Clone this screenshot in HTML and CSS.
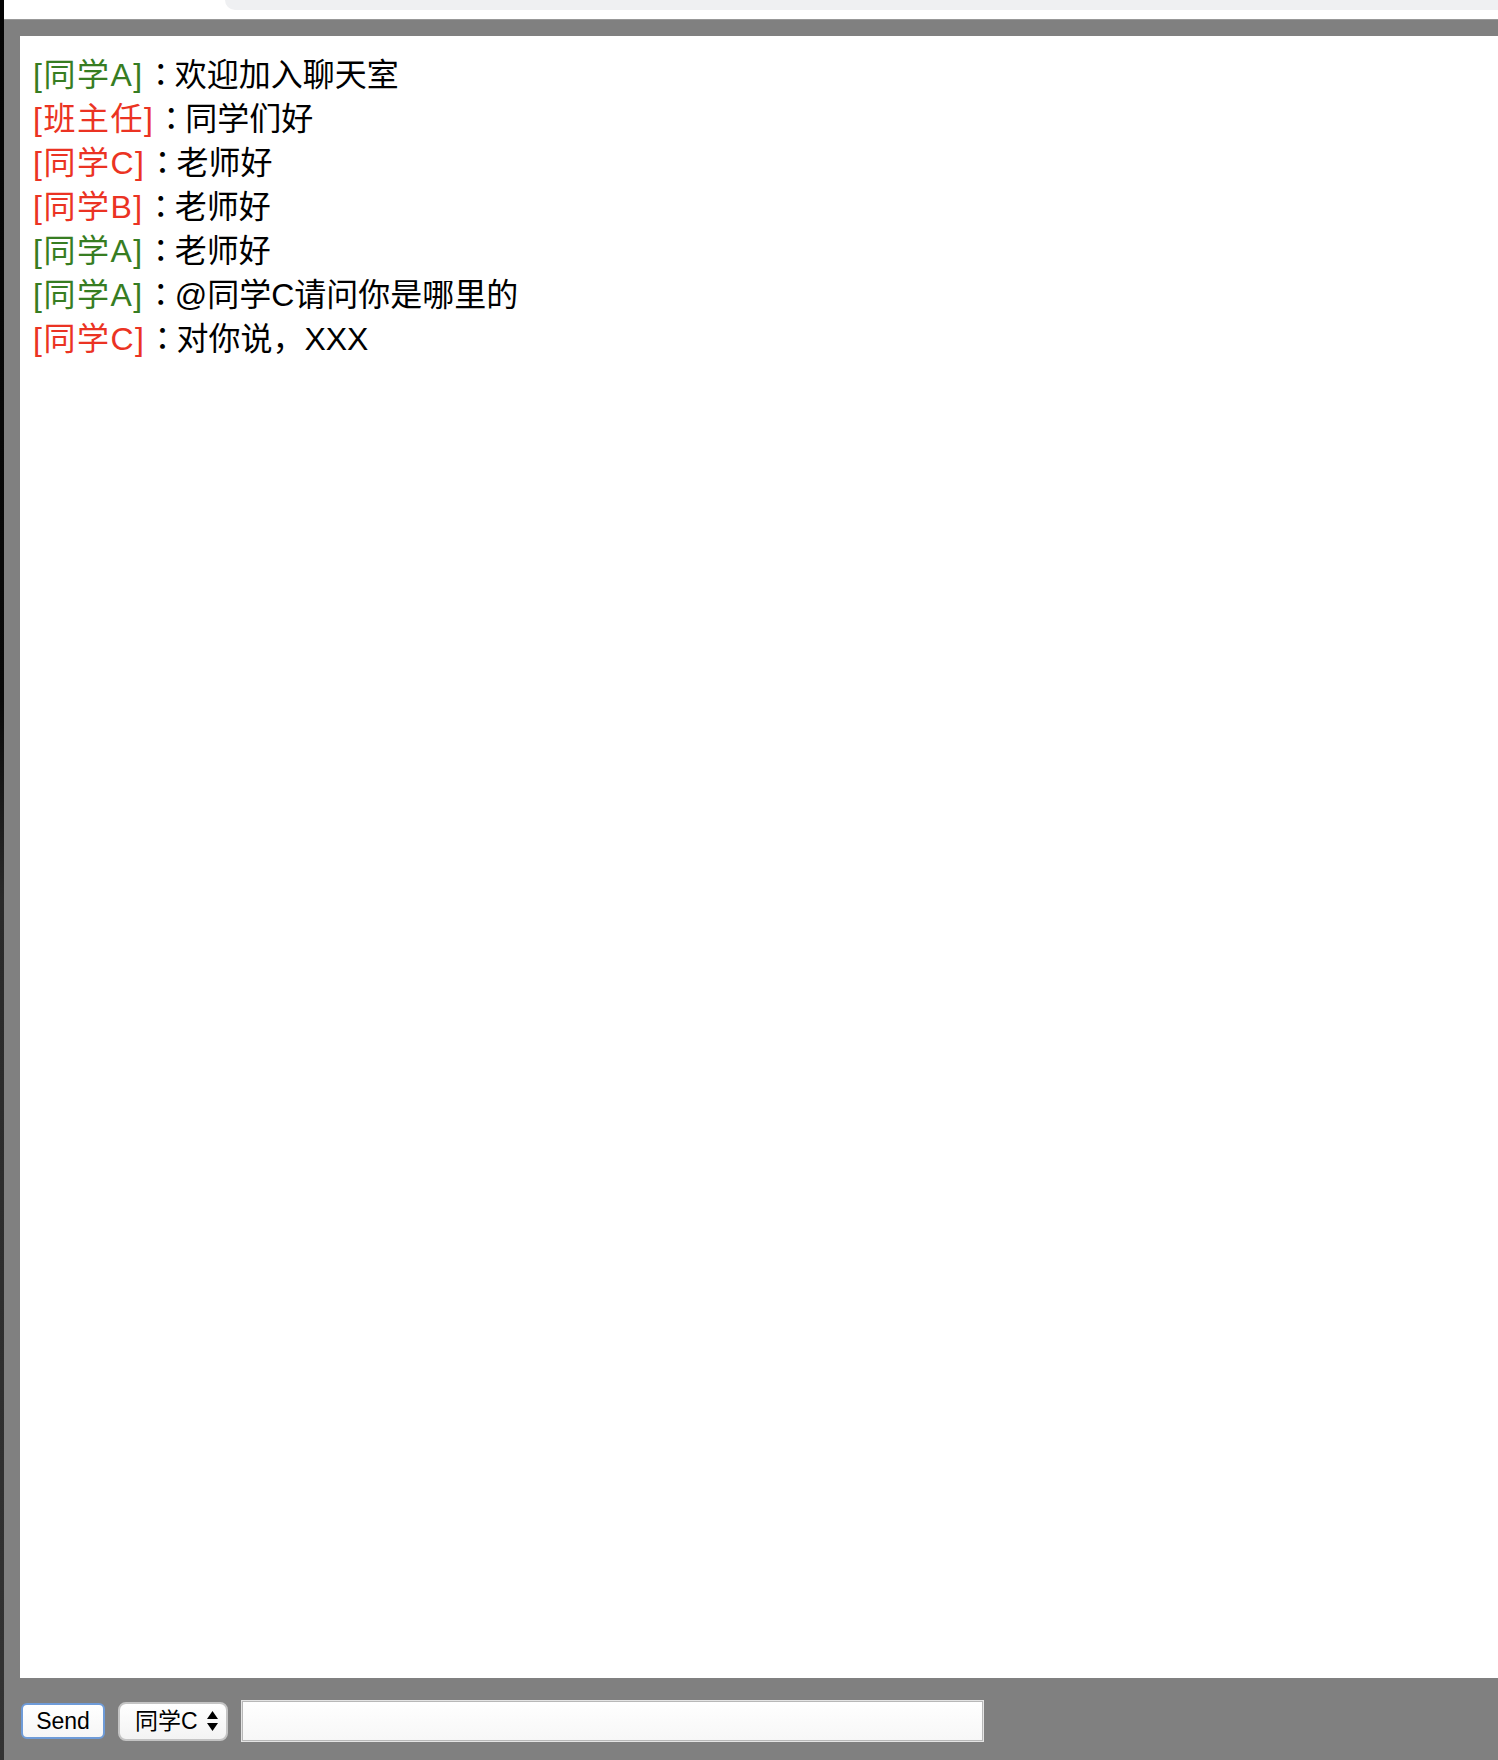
FILE: index.html
```html
<!DOCTYPE html>
<html lang="zh-CN">
<head>
<meta charset="utf-8">
<title>聊天室</title>
<link rel="stylesheet" href="styles.css">
</head>
<body>
<div class="app">
  <div class="edge"></div>
  <div class="main">
    <div class="chrome"><div class="tab"></div></div>
    <div class="stage">
      <div class="log">
        <div class="msg"><span class="who green">[同学A]</span><span class="colon">：</span>欢迎加入聊天室</div>
        <div class="msg"><span class="who red">[班主任]</span><span class="colon">：</span>同学们好</div>
        <div class="msg"><span class="who red">[同学C]</span><span class="colon">：</span>老师好</div>
        <div class="msg"><span class="who red">[同学B]</span><span class="colon">：</span>老师好</div>
        <div class="msg"><span class="who green">[同学A]</span><span class="colon">：</span>老师好</div>
        <div class="msg"><span class="who green">[同学A]</span><span class="colon">：</span>@同学C请问你是哪里的</div>
        <div class="msg"><span class="who red">[同学C]</span><span class="colon">：</span>对你说，XXX</div>
      </div>
      <div class="controls">
        <button class="send">Send</button>
        <div class="select"><span class="sel-text">同学C</span><svg class="arrows" width="11" height="20" viewBox="0 0 11 20"><path d="M5.5 0 L11 8 L0 8 Z" fill="#000"/><path d="M0 12 L11 12 L5.5 20 Z" fill="#000"/></svg></div>
        <div class="input"></div>
      </div>
    </div>
  </div>
</div>
</body>
</html>
```

FILE: styles.css
```css
html, body {
  margin: 0;
  padding: 0;
  background: #808080;
  overflow: hidden;
}
.app {
  display: flex;
  width: 1498px;
  height: 1760px;
}
.edge {
  width: 4px;
  flex: none;
  background: linear-gradient(#050505 0, #0a0a0a 700px, #2a2a2a 900px, #333 1760px);
}
.main {
  flex: 1;
  display: flex;
  flex-direction: column;
  min-width: 0;
}
.chrome {
  height: 19px;
  flex: none;
  background: #ffffff;
}
.tab {
  margin-left: 221px;
  height: 10px;
  background: #eff0f2;
  border-bottom-left-radius: 12px;
}
.stage {
  flex: 1;
  background: #808080;
  border-top: 1px solid #989898;
  padding-top: 16px;
}
.log {
  margin-left: 16px;
  height: 1642px;
  background: #ffffff;
  box-sizing: border-box;
  padding: 14px 13px;
  font-family: "Liberation Sans", "Noto Sans CJK SC", sans-serif;
  font-size: 32px;
  color: #000;
}
.msg {
  height: 44px;
  line-height: 44px;
  white-space: nowrap;
}
.who {
  letter-spacing: 1.5px;
}
.colon {
  font-family: "Noto Sans CJK JP", sans-serif;
  display: inline-block;
  width: 30px;
  text-align: center;
  margin-left: 1px;
}
.green { color: #377d22; }
.red { color: #eb3323; }
.controls {
  display: flex;
  align-items: center;
  gap: 13px;
  padding-left: 17px;
  margin-top: 22px;
  height: 42px;
}
.send {
  width: 84px;
  height: 36px;
  box-sizing: border-box;
  border: 2px solid #6e9bd8;
  border-radius: 6px;
  background: linear-gradient(#ffffff, #f6f6f6);
  font-family: "Liberation Sans", sans-serif;
  font-size: 23px;
  color: #000;
  padding: 0;
  margin: 0;
}
.select {
  width: 110px;
  height: 39px;
  box-sizing: border-box;
  border: 2px solid #c4c4c4;
  border-radius: 8px;
  background: linear-gradient(#ffffff, #f3f3f3);
  display: flex;
  align-items: center;
  padding-left: 15px;
  gap: 9px;
  font-family: "Liberation Sans", "Noto Sans CJK SC", sans-serif;
  font-size: 23px;
  color: #000;
}
.sel-text {
  line-height: 1;
}
.arrows {
  flex: none;
}
.input {
  width: 743px;
  height: 42px;
  box-sizing: border-box;
  border: 1px solid #e4e4e4;
  box-shadow: inset 0 0 0 1px #b8b8b8;
  background: linear-gradient(#ffffff, #f7f7f7);
}
```
